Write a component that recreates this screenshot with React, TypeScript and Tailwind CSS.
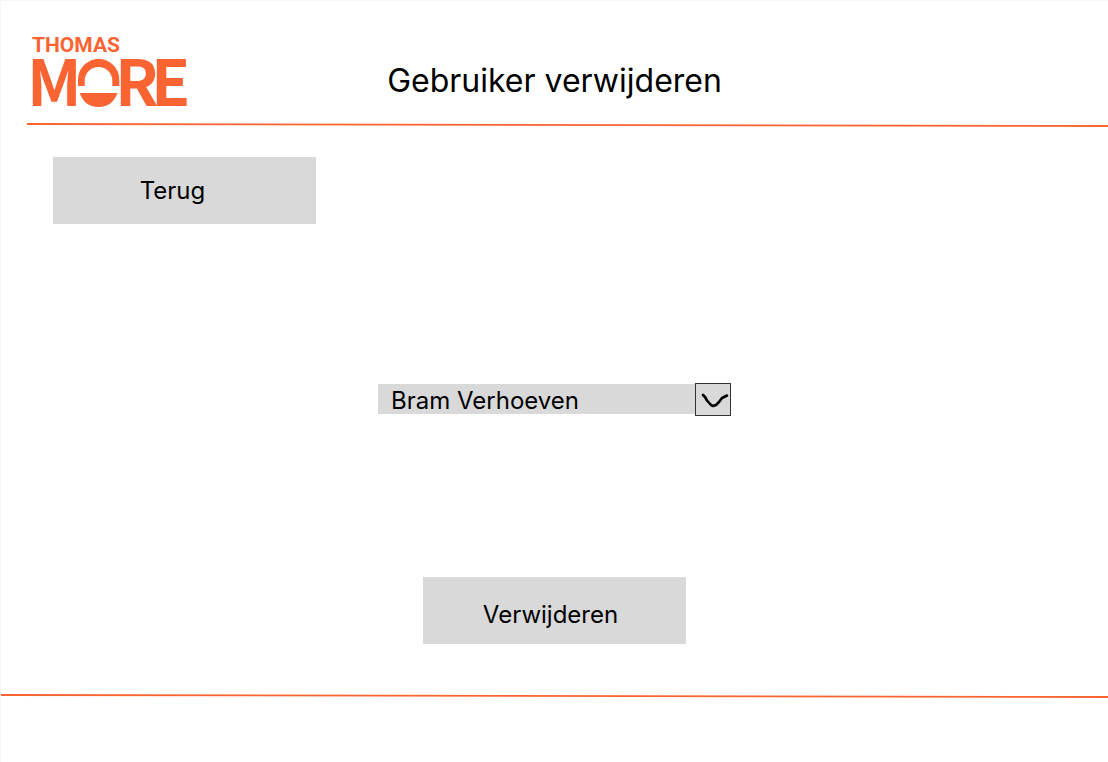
import { useState } from "react";

const users = ["Bram Verhoeven"];

function Logo() {
  return (
    <svg
      role="img"
      aria-label="Thomas More"
      viewBox="-9 -8 172 98"
      className="h-[98px] w-[172px] shrink-0 fill-[#fa6432]"
    >
      <text x="-1" y="19" className="font-['Roboto',sans-serif] text-[21px] font-bold">
        THOMAS
      </text>
      <g className="font-['Noto_Sans_CJK_SC',sans-serif] text-[64px] font-bold">
        <text x="-6" y="73">
          M
        </text>
        <text x="82" y="73">
          R
        </text>
        <text x="118" y="73">
          E
        </text>
      </g>
      <path d="M45 53 V46.500 A20.600 20.600 0 0 1 86.300 46.500 V53 H79.300 V47.500 A13.800 13.500 0 0 0 51.700 47.500 V53 Z" />
      <path d="M46.700 60 H84.500 C81 69 75 74 65.600 74 C56 74 50 69 46.700 60 Z" />
    </svg>
  );
}

function Rule() {
  return (
    <svg
      aria-hidden="true"
      viewBox="0 0 1108 4"
      preserveAspectRatio="none"
      className="block h-1 w-full stroke-[#fa6432]"
    >
      <line x1="0" y1="1" x2="1108" y2="3" strokeWidth="1.8" />
    </svg>
  );
}

export default function App() {
  const [user, setUser] = useState(users[0]);

  return (
    <div className="flex min-h-screen flex-col border-t border-l border-[#f7f7f7] bg-white font-['Inter',sans-serif] text-black">
      <header>
        <div className="grid grid-cols-[1fr_auto_1fr] items-start pt-6 pl-[23px]">
          <Logo />
          <h1 className="pt-9 pr-[23px] text-[32px] leading-10">Gebruiker verwijderen</h1>
        </div>
        <div className="pl-[26px]">
          <Rule />
        </div>
      </header>

      <main className="flex flex-1 flex-col px-13 pt-[30px]">
        <button type="button" className="h-[67px] w-[263px] self-start bg-[#d9d9d9] pr-6 text-2xl">
          Terug
        </button>

        <div className="mt-40 flex items-center self-center">
          <label htmlFor="user" className="sr-only">
            Gebruiker
          </label>
          <div className="relative flex items-center">
            <select
              id="user"
              value={user}
              onChange={(event) => setUser(event.target.value)}
              className="h-[30px] w-[353px] appearance-none bg-[#d9d9d9] pt-1 pr-12 pl-[13px] text-2xl leading-[26px]"
            >
              {users.map((name) => (
                <option key={name}>{name}</option>
              ))}
            </select>
            <span className="pointer-events-none absolute right-0 h-[33px] w-9 border border-[#333] bg-[#d9d9d9]">
              <svg
                aria-hidden="true"
                viewBox="0 0 34 31"
                className="h-full w-full fill-none stroke-black"
                strokeWidth="2.6"
                strokeLinecap="round"
                strokeLinejoin="round"
              >
                <path d="M7 11 L9 13 L11 16.500 L15 21 L17 22 L20 21 L23 18 L26 14 L28 13 L31 11.500" />
              </svg>
            </span>
          </div>
        </div>

        <button
          type="button"
          className="mt-[163px] h-[67px] w-[263px] self-center bg-[#d9d9d9] pt-2 pr-2 text-2xl"
        >
          Verwijderen
        </button>
      </main>

      <footer className="pb-16">
        <Rule />
      </footer>
    </div>
  );
}
